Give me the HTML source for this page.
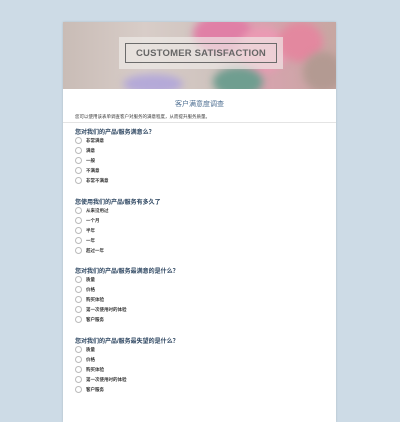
<!DOCTYPE html><html><head><style>
body{margin:0;width:400px;height:400px;background:#cddbe6;overflow:hidden;font-family:"Liberation Sans","Noto Sans CJK SC",sans-serif}
.card{position:absolute;left:63px;top:22px;width:273px;height:400px;background:#fff;box-shadow:0 0 2px rgba(0,0,0,.15)}
.img{height:67px;position:relative;overflow:hidden;background:linear-gradient(90deg,#c9bcb6 0%,#d8cdc8 30%,#cfc3be 55%,#d9a3b0 70%,#c7a7a2 100%)}
.f{position:absolute;border-radius:50%;filter:blur(4px)}
.box{position:absolute;left:56px;top:15px;width:164px;height:32px;background:rgba(240,236,234,.65)}
.box div{position:absolute;left:6px;top:6px;right:6px;bottom:6px;border:1px solid #6b6b6b;font-size:9.5px;font-weight:bold;color:#666;text-align:center;line-height:19px;letter-spacing:.2px}
h1{margin:0;position:absolute;top:77px;width:100%;text-align:center;font-size:7px;font-weight:normal;color:#4e6f92}
.d{position:absolute;top:92px;left:12px;font-size:4.5px;color:#333}
.sep{position:absolute;top:100px;left:0;right:0;height:1px;background:#e4e4e4}
.q{position:absolute;left:12px;font-size:6px;font-weight:bold;color:#2c4560}
.o{position:absolute;left:12px;font-size:4.5px;font-weight:bold;color:#333;line-height:7px}
.o:before{content:"";display:inline-block;width:5px;height:5px;border:1px solid #bbb;border-radius:50%;vertical-align:middle;margin-right:4px}
</style></head><body><div class="card">
<div class="img">
<div class="f" style="left:130px;top:-8px;width:60px;height:40px;background:#e07fa6"></div>
<div class="f" style="left:175px;top:5px;width:50px;height:45px;background:#ea9ab3"></div>
<div class="f" style="left:215px;top:0;width:45px;height:40px;background:#e3889f"></div>
<div class="f" style="left:150px;top:45px;width:50px;height:30px;background:#6f9e90"></div>
<div class="f" style="left:60px;top:52px;width:60px;height:20px;background:#b4a9d8"></div>
<div class="f" style="left:240px;top:30px;width:40px;height:40px;background:#b39a92"></div>
<div class="box"><div>CUSTOMER SATISFACTION</div></div>
</div>
<h1>客户满意度调查</h1>
<div class="d">您可以使用该表单调查客户对服务的满意程度，从而提升服务质量。</div>
<div class="sep"></div>
<div class="q" style="top:105px">您对我们的产品/服务满意么？</div>
<div class="o" style="top:115px">非常满意</div><div class="o" style="top:125px">满意</div><div class="o" style="top:135px">一般</div><div class="o" style="top:145px">不满意</div><div class="o" style="top:155px">非常不满意</div>
<div class="q" style="top:175px">您使用我们的产品/服务有多久了</div>
<div class="o" style="top:185px">从来没用过</div><div class="o" style="top:195px">一个月</div><div class="o" style="top:205px">半年</div><div class="o" style="top:215px">一年</div><div class="o" style="top:225px">超过一年</div>
<div class="q" style="top:244px">您对我们的产品/服务最满意的是什么？</div>
<div class="o" style="top:254px">质量</div><div class="o" style="top:264px">价格</div><div class="o" style="top:274px">购买体验</div><div class="o" style="top:284px">第一次使用时的体验</div><div class="o" style="top:294px">客户服务</div>
<div class="q" style="top:314px">您对我们的产品/服务最失望的是什么？</div>
<div class="o" style="top:324px">质量</div><div class="o" style="top:334px">价格</div><div class="o" style="top:344px">购买体验</div><div class="o" style="top:354px">第一次使用时的体验</div><div class="o" style="top:364px">客户服务</div>
</div></body></html>
